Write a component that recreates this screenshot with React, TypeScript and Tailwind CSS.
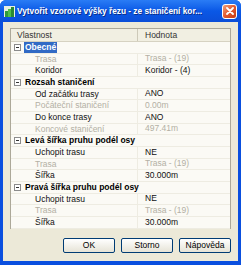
import React from "react";

type Row =
  | { kind: "cat"; label: string; selected?: boolean }
  | { kind: "prop"; label: string; value: string; disabled?: boolean };

const rows: Row[] = [
  { kind: "cat", label: "Obecné", selected: true },
  { kind: "prop", label: "Trasa", value: "Trasa - (19)", disabled: true },
  { kind: "prop", label: "Koridor", value: "Koridor - (4)" },
  { kind: "cat", label: "Rozsah staničení" },
  { kind: "prop", label: "Od začátku trasy", value: "ANO" },
  { kind: "prop", label: "Počáteční staničení", value: "0.00m", disabled: true },
  { kind: "prop", label: "Do konce trasy", value: "ANO" },
  { kind: "prop", label: "Koncové staničení", value: "497.41m", disabled: true },
  { kind: "cat", label: "Levá šířka pruhu podél osy" },
  { kind: "prop", label: "Uchopit trasu", value: "NE" },
  { kind: "prop", label: "Trasa", value: "Trasa - (19)", disabled: true },
  { kind: "prop", label: "Šířka", value: "30.000m" },
  { kind: "cat", label: "Pravá šířka pruhu podél osy" },
  { kind: "prop", label: "Uchopit trasu", value: "NE" },
  { kind: "prop", label: "Trasa", value: "Trasa - (19)", disabled: true },
  { kind: "prop", label: "Šířka", value: "30.000m" },
];

function MinusBox() {
  return (
    <span className="flex h-[7px] w-[7px] items-center justify-center border border-[#8c8c8c] bg-white">
      <span className="h-px w-[3px] bg-[#333]" />
    </span>
  );
}

function GridRow({ row }: { row: Row }) {
  if (row.kind === "cat") {
    return (
      <div className="flex h-[11.67px] items-center border-b border-[#eeece2]">
        <div className="flex w-[13px] shrink-0 items-center justify-center">
          <MinusBox />
        </div>
        <div className="flex flex-1 items-center">
          <span
            className={
              row.selected
                ? "bg-[#316ac5] px-[1px] font-bold leading-[11px] text-white"
                : "pl-[1px] font-bold leading-[11px] text-black"
            }
          >
            {row.label}
          </span>
        </div>
      </div>
    );
  }
  const color = row.disabled ? "text-[#b3b0a4]" : "text-[#111]";
  return (
    <div className="flex h-[11.67px] items-center border-b border-[#eeece2]">
      <div className="w-[13px] shrink-0 self-stretch" />
      <div className={`w-[114px] shrink-0 self-stretch border-r border-[#eeece2] pl-[11px] leading-[11px] ${color}`}>
        {row.label}
      </div>
      <div className={`flex-1 pl-[7px] leading-[11px] ${color}`}>{row.value}</div>
    </div>
  );
}

export default function App() {
  return (
    <div
      className="flex h-[265px] w-[241px] flex-col overflow-hidden rounded-t-[6px] bg-[#0a4fdf] text-[8.5px]"
      style={{ fontFamily: '"Liberation Sans", Arial, sans-serif' }}
    >
      {/* title bar */}
      <div className="flex h-[22px] shrink-0 items-center bg-gradient-to-b from-[#2a7cf5] via-[#0a58e6] to-[#0b4ed8] px-[4px]">
        <svg width="11" height="11" viewBox="0 0 11 11" className="shrink-0">
          <rect x="0" y="0" width="11" height="11" fill="#e9efe0" />
          <rect x="1" y="5" width="3" height="6" fill="#2f9b3a" />
          <rect x="4" y="3" width="3" height="8" fill="#4fbf4a" />
          <rect x="7" y="1" width="3" height="10" fill="#2a8a33" />
        </svg>
        <span
          className="ml-[2px] flex-1 overflow-hidden whitespace-nowrap text-[8.3px] font-bold text-white"
          style={{ textShadow: "1px 1px 0 #0a2f8a" }}
        >
          Vytvořit vzorové výšky řezu - ze staničení kor...
        </span>
        <div className="ml-[3px] flex h-[15px] w-[15px] shrink-0 items-center justify-center rounded-[3px] border border-white bg-gradient-to-br from-[#f0a07a] via-[#e2582e] to-[#c23a14]">
          <svg width="8" height="8" viewBox="0 0 8 8">
            <path d="M1 1 L7 7 M7 1 L1 7" stroke="white" strokeWidth="1.8" strokeLinecap="round" />
          </svg>
        </div>
      </div>

      {/* body */}
      <div className="mx-[3px] mb-[4px] flex flex-1 flex-col bg-[#ece9d8] px-[7px] pt-[6px]">
        <div className="flex h-[201px] flex-col border border-[#aca899] bg-[#fbfaf5]">
          <div className="flex h-[13px] shrink-0 items-center border-b border-[#d6d2c2] bg-[#f1efe2] text-[#333]">
            <div className="w-[127px] shrink-0 self-stretch border-r border-[#cdc9b8] pl-[6px] leading-[12px]">
              Vlastnost
            </div>
            <div className="flex-1 pl-[7px] leading-[12px]">Hodnota</div>
          </div>
          {rows.map((r, i) => (
            <GridRow key={i} row={r} />
          ))}
        </div>

        <div className="mt-[9px] flex justify-end gap-[6px]">
          {["OK", "Storno", "Nápověda"].map((b) => (
            <button
              key={b}
              className="flex h-[15px] w-[52px] items-center justify-center rounded-[2px] border border-[#003c74] bg-gradient-to-b from-white to-[#e6e3d6] text-[8.5px] text-black"
            >
              {b}
            </button>
          ))}
        </div>
      </div>
    </div>
  );
}
